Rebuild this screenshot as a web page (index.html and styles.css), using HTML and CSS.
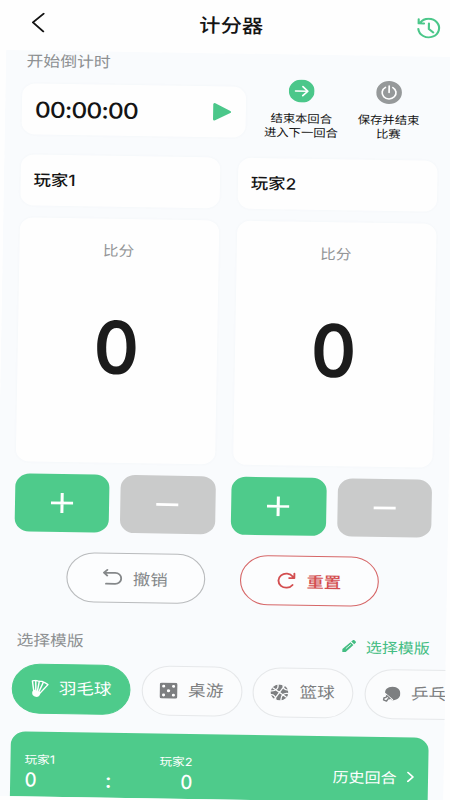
FILE: index.html
```html
<!DOCTYPE html>
<html lang="zh-CN">
<head>
<meta charset="utf-8">
<title>计分器</title>
<link rel="stylesheet" href="styles.css">
</head>
<body>
<div class="screen">
  <header class="header">
    <svg class="back" width="12" height="20" viewBox="0 0 12 20"><path d="M11 1 1.5 10 11 19"/></svg>
    <h1>计分器</h1>
    <svg class="history" width="22" height="22" viewBox="0 0 22 22"><path d="M3.2 5.2A9.3 9.3 0 1 1 1.6 11.500M1.800 1.800v4.200h4.800M11 5.800v5.700l4 3.300"/></svg>
  </header>
  <main class="panel">
    <div class="label countdown-label">开始倒计时</div>
    <section class="top">
      <div class="card timer">
        <span>00:00:00</span>
        <svg width="17" height="19" viewBox="0 0 17 19"><path d="M2 2v15L15.500 9.500z"/></svg>
      </div>
      <div class="action next">
        <svg width="23" height="23" viewBox="0 0 23 23"><circle cx="11.500" cy="11.500" r="11.500"/><path d="M6 11.500h11M12.500 7l4.500 4.500-4.500 4.500"/></svg>
        <p>结束本回合<br>进入下一回合</p>
      </div>
      <div class="action save">
        <svg width="23" height="23" viewBox="0 0 23 23"><circle cx="11.500" cy="11.500" r="11.500"/><path d="M11.500 5v6.500M8.200 6.500a6.200 6.200 0 1 0 6.600 0"/></svg>
        <p>保存并结束<br>比赛</p>
      </div>
    </section>
    <section class="players">
      <div class="card name">玩家1</div>
      <div class="card name">玩家2</div>
      <div class="card score"><span>比分</span><b>0</b></div>
      <div class="card score"><span>比分</span><b>0</b></div>
    </section>
    <section class="steps">
      <div class="pair">
        <button class="plus"><svg width="20" height="20" viewBox="0 0 20 20"><path d="M0 10h20M10 0v20"/></svg></button>
        <button class="minus"><svg width="20" height="20" viewBox="0 0 20 20"><path d="M0 10h20"/></svg></button>
      </div>
      <div class="pair">
        <button class="plus"><svg width="20" height="20" viewBox="0 0 20 20"><path d="M0 10h20M10 0v20"/></svg></button>
        <button class="minus"><svg width="20" height="20" viewBox="0 0 20 20"><path d="M0 10h20"/></svg></button>
      </div>
    </section>
    <section class="controls">
      <button class="undo"><svg width="18" height="18" viewBox="0 0 18 18"><path d="M4.500 1.200 1.500 4l3 2.800M1.800 4h9.700a5.300 5.300 0 0 1 0 11H3.500"/></svg>撤销</button>
      <button class="reset"><svg width="18" height="18" viewBox="0 0 18 18"><path d="M15 13.300A7 7 0 1 1 15 5L16 6.200M16.500 2v4.600h-4.600"/></svg>重置</button>
    </section>
    <section class="templates-head">
      <span class="label">选择模版</span>
      <span class="choose"><svg width="13" height="13" viewBox="0 0 13 13"><path d="M.5 12.500v-3L7.600 2.700l2.700 2.700L3.500 12.500z"/><path d="M8.300 2 9.700.7c.5-.4 1-.4 1.400 0l1.200 1.200c.4.4.4.900 0 1.300L11 4.700z"/><path class="cut" d="m3.800 9 4-3.900"/></svg>选择模版</span>
    </section>
    <section class="chips">
      <div class="chip active">
        <svg width="16" height="18" viewBox="0 0 16 18"><path class="line" d="M2.600 10.500 1.300 1.200 4.300.8l2.500.6 3 .2 2.500 1.200 3 2L8.700 13M4.300.8l.2 10M7.500 1.400 6 11.200M11.200 2.300 7.300 12"/><path class="solid" d="m1.500 12 1-2 6.500 2.500-.6 2c-.4 1.900-2 3-3.900 2.700-2.400-.4-3.700-2.700-3-5.200z"/></svg>羽毛球
      </div>
      <div class="chip">
        <svg width="16" height="16" viewBox="0 0 16 16"><rect class="solid" width="16" height="16" rx="2"/><g class="hole"><circle cx="3.600" cy="3.600" r="1.400"/><circle cx="12.400" cy="3.600" r="1.400"/><circle cx="8" cy="8" r="1.500"/><circle cx="3.600" cy="12.400" r="1.400"/><circle cx="12.400" cy="12.400" r="1.400"/></g></svg>桌游
      </div>
      <div class="chip">
        <svg width="16" height="16" viewBox="0 0 16 16"><circle class="solid" cx="8" cy="8" r="8"/><path class="seam" d="M3.500 15 12.500 1M2 3.500 14 12.500M6.500 0c1 4-2 7-6.500 6.500M16 9c-4-1-7 2-6.500 7M0 10.500c3-.5 4.500 1.500 5 5M11 0c0 3.500 2 5.500 5 5.500"/></svg>篮球
      </div>
      <div class="chip last">
        <svg width="16" height="16" viewBox="0 0 16 16"><path class="solid" d="M2.600 8C1.500 3.500 4.500.5 9 .5c4.200 0 7 3 7 6.700 0 4-3 7-7.500 7z"/><path class="seam" d="m2.500 7.500 6.500 6"/><path class="ring" d="m3.800 9.500 3 3-1.800.3-1.300 2.200L1 13.800l.5-2.100 1.800-.4z"/></svg>乒乓球
      </div>
    </section>
    <section class="banner">
      <div class="side"><span>玩家1</span><b>0</b></div>
      <div class="colon">:</div>
      <div class="side right"><span>玩家2</span><b>0</b></div>
      <div class="rounds">历史回合<svg width="7" height="11" viewBox="0 0 7 11"><path d="m1 1 4.500 4.500L1 10"/></svg></div>
    </section>
  </main>
</div>
</body>
</html>
```

FILE: styles.css
```css
* { box-sizing: border-box; margin: 0; padding: 0; }
html, body { width: 450px; height: 800px; overflow: hidden; background: #fefefe; }
body { font-family: Inter, "Noto Sans CJK SC", sans-serif; color: #141414; }
svg { display: block; flex: none; fill: none; stroke: currentColor; stroke-linecap: round; stroke-linejoin: round; }
button { font: inherit; border: 0; background: none; display: flex; align-items: center; justify-content: center; }

/* The whole screen is drawn slightly skewed and stretched sideways. */
.screen {
  width: 402px; height: 796px; overflow: hidden;
  transform-origin: 0 0;
  transform: matrix(1.12, 0.0174, -0.0175, 1, 7, 0);
}

.header { height: 50px; padding: 0 14px 7px 22px; display: flex; align-items: center; justify-content: space-between; }
.header h1 { font-size: 19px; font-weight: 500; line-height: 28px; margin: 2px 0 0 1px; }
.back { stroke-width: 1.7; }
.history { color: #4bc78a; stroke-width: 1.9; }

.panel { height: 746px; background: #f9fbfd; padding: 0 14.500px; overflow: hidden; }
.label { font-size: 15px; line-height: 20px; color: #8d9092; }
.countdown-label { padding: 1px 0 0 4px; height: 33px; }
.card { background: #fefefe; border-radius: 12px; box-shadow: 0 0 3px rgba(60, 80, 100, .035); }

.top { display: flex; height: 51px; }
.timer { width: 200px; height: 51px; display: flex; align-items: center; justify-content: space-between; padding: 0 13px 0 12px; font-size: 22px; font-weight: 500; letter-spacing: -.8px; }
.timer span { white-space: nowrap; }
.timer svg { color: #4bc78a; fill: currentColor; stroke-width: 2.500; }
.action { text-align: center; margin-top: -8px; }
.action p { font-size: 11px; line-height: 14.500px; margin-top: 8.500px; white-space: nowrap; }
.action svg { margin: 0 auto; stroke: #fff; stroke-width: 1.500; }
.action circle { stroke: none; }
.next { width: 70px; margin-left: 15px; }
.next circle { fill: #4bc78a; }
.save { width: 70px; margin-left: 8px; }
.save circle { fill: #96999a; }

.players { display: grid; grid-template-columns: 178px 178px; column-gap: 16px; row-gap: 12px; margin-top: 20px; }
.name { height: 51px; padding: 0 12px; font-size: 15.500px; font-weight: 500; line-height: 52px; }
.score { height: 244px; text-align: center; display: flex; flex-direction: column; align-items: center; }
.score span { font-size: 14px; line-height: 20px; margin-top: 21.500px; color: #949698; }
.score b { font-size: 73px; font-weight: 600; line-height: 90px; margin-top: 42px; color: #1b1b1b; transform: scaleX(.84); }

.steps { display: flex; gap: 14.500px; margin: 12px -1px 0 0; }
.pair { display: flex; gap: 10px; }
.pair button { width: 84.500px; height: 58px; border-radius: 13px; color: #fff; }
.pair svg { stroke-width: 2.700; stroke-linecap: butt; }
.plus { background: #4ecb8b; }
.minus { background: #cacbcb; }

.controls { display: flex; justify-content: center; gap: 31px; margin-top: 20px; }
.controls button { width: 124px; height: 50px; border-radius: 25px; border: 1px solid #b9bbbd; font-size: 15.500px; color: #85888a; gap: 9px; background: #fcfdfe; }
.controls svg { stroke-width: 1.700; }
.controls .reset { color: #d34e50; border-color: #d66768; font-weight: 500; }

.templates-head { display: flex; justify-content: space-between; align-items: center; height: 20px; margin-top: 29px; padding-left: 4px; }
.choose { display: flex; align-items: center; gap: 8px; font-size: 14.300px; color: #43bd82; }
.choose svg { fill: currentColor; stroke: none; }
.choose .cut { fill: none; stroke: #f9fbfd; stroke-width: .8; }

.chips { display: flex; gap: 9.500px; margin-top: 12.500px; }
.chip { flex: none; width: 90px; height: 50px; border-radius: 25px; border: 1px solid #e6e8ea; background: #fbfcfd; color: #7d7f81; font-size: 15.700px; line-height: 48px; display: flex; align-items: center; padding-left: 15px; gap: 10px; white-space: nowrap; }
.chip .solid { fill: currentColor; stroke: none; }
.chip .line { stroke-width: 1.300; }
.chip .hole { fill: #fff; stroke: none; }
.chip .seam { stroke: #fbfcfd; stroke-width: 1.200; }
.chip .ring { fill: #fbfcfd; stroke: currentColor; stroke-width: 1.300; }
.chip.active { width: 106.500px; padding-left: 16.500px; gap: 9px; background: #4ecb8b; border-color: #4ecb8b; color: #fff; }
.chip.last { width: 107px; }

.banner { height: 90px; margin: 18.500px -.5px 0 0; border-radius: 13px; background: #4ecb8b; color: #fff; display: flex; padding: 19px 12px 0 13px; }
.side { width: 33px; display: flex; flex-direction: column; align-items: flex-start; font-size: 11.300px; line-height: 19px; white-space: nowrap; }
.side b { font-size: 19.500px; font-weight: 500; line-height: 20px; transform: scaleX(.85); transform-origin: 0 50%; }
.side.right { align-items: flex-end; margin-left: 38px; }
.side.right b { transform-origin: 100% 50%; }
.colon { width: 8px; margin-left: 38px; padding-top: 19px; font-size: 20px; font-weight: 500; line-height: 20px; text-align: center; }
.rounds { margin-left: auto; height: 20px; margin-top: 10.500px; display: flex; align-items: center; gap: 9px; font-size: 14.300px; }
.rounds svg { stroke-width: 1.600; }
```
